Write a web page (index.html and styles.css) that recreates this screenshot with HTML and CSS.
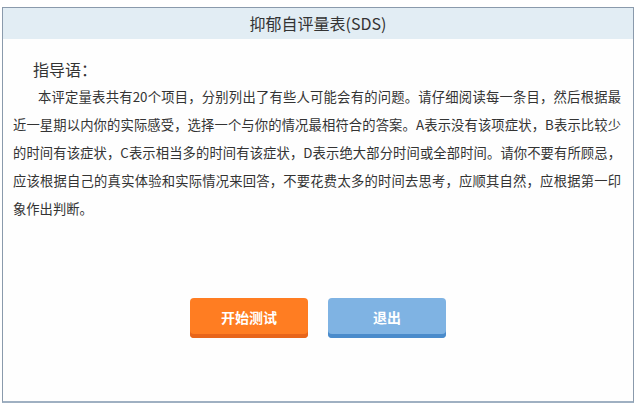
FILE: index.html
```html
<!DOCTYPE html>
<html lang="zh-CN">
<head>
<meta charset="utf-8">
<title>抑郁自评量表(SDS)</title>
<link rel="stylesheet" href="styles.css">
</head>
<body>
<div class="frame">
  <div class="header">抑郁自评量表(SDS)</div>
  <div class="content">
    <div class="guide-title">指导语：</div>
    <p class="guide-text">本评定量表共有20个项目，分别列出了有些人可能会有的问题。请仔细阅读每一条目，然后根据最近一星期以内你的实际感受，选择一个与你的情况最相符合的答案。A表示没有该项症状，B表示比较少的时间有该症状，C表示相当多的时间有该症状，D表示绝大部分时间或全部时间。请你不要有所顾忌，应该根据自己的真实体验和实际情况来回答，不要花费太多的时间去思考，应顺其自然，应根据第一印象作出判断。</p>
    <div class="actions">
      <button class="btn btn-start">开始测试</button>
      <button class="btn btn-exit">退出</button>
    </div>
  </div>
</div>
</body>
</html>
```
FILE: styles.css
```css
html, body {
  margin: 0;
  padding: 0;
  background: #ffffff;
}
body {
  font-family: "Noto Sans CJK SC", "Noto Sans", sans-serif;
  color: #333333;
}
.frame {
  margin: 7px 0 0 2px;
  width: 630px;
  height: 393px;
  border: 1px solid #8a9aac;
  border-bottom: 2px solid #9fb0c2;
  background: #fefefe;
  display: flex;
  flex-direction: column;
}
.header {
  height: 31px;
  line-height: 30px;
  background: #e2edf4;
  text-align: center;
  font-size: 16px;
  color: #333333;
}
.content {
  flex: 1;
  display: flex;
  flex-direction: column;
}
.guide-title {
  margin: 18px 0 0 30px;
  font-size: 16px;
  line-height: 24px;
  color: #333333;
}
.guide-text {
  margin: 2px 0 0 10px;
  width: 608px;
  font-size: 13.3px;
  line-height: 28px;
  text-indent: 25px;
  text-align: justify;
  color: #333333;
}
.actions {
  margin-top: 75px;
  display: flex;
  justify-content: center;
  gap: 20px;
}
.btn {
  width: 118px;
  height: 40px;
  border: none;
  border-radius: 4px;
  color: #ffffff;
  font-family: "Noto Sans CJK SC", sans-serif;
  font-size: 14px;
  font-weight: bold;
  padding: 0 0 3px 0;
  cursor: pointer;
}
.btn-start {
  background: #ff7d22;
  box-shadow: inset 0 -4px 0 #e8651a;
}
.btn-exit {
  background: #7fb3e3;
  box-shadow: inset 0 -4px 0 #4a8bcb;
}
```
